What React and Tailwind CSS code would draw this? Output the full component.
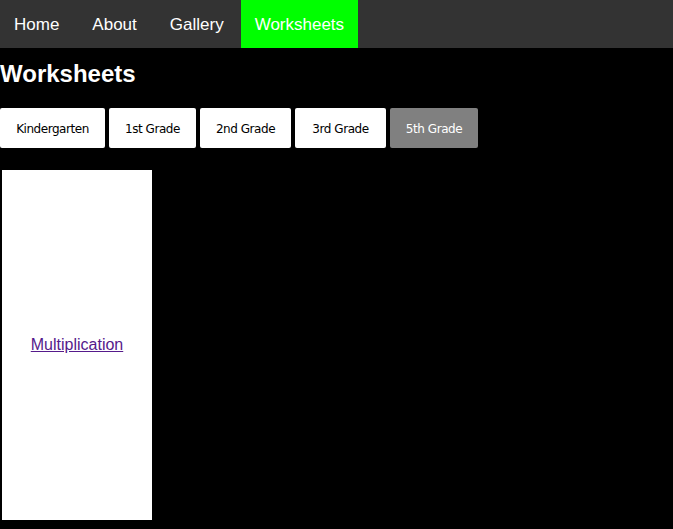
const grades = [
  { label: "Kindergarten", w: "w-[105px]" },
  { label: "1st Grade", w: "w-[87px]" },
  { label: "2nd Grade", w: "w-[91px]" },
  { label: "3rd Grade", w: "w-[91px]" },
  { label: "5th Grade", w: "w-[88px]" },
];

export default function App() {
  const active = "5th Grade";

  return (
    <div className="min-h-[529px] bg-black font-['Liberation_Sans',Arial,sans-serif]">
      <nav className="flex h-12 bg-[#333333] pt-[1px] text-[17px] text-white">
        <a className="flex items-center pl-[14px] pr-[17px]">Home</a>
        <a className="flex items-center px-[16px]">About</a>
        <a className="flex items-center pl-[17px] pr-[17px]">Gallery</a>
        <a className="-mt-[1px] flex items-center bg-[#00ff00] px-[14px] pt-[1px]">Worksheets</a>
      </nav>

      <h2 className="mt-[12px] text-[24px] font-bold leading-[28px] text-white">Worksheets</h2>

      <div className="mt-[20px] flex gap-[4px]">
        {grades.map((g) => (
          <button
            key={g.label}
            className={
              "h-10 rounded-[2px] pt-[1px] font-['DejaVu_Sans',Tahoma,sans-serif] text-[12px] tracking-[-0.45px] " +
              g.w +
              " " +
              (g.label === active ? "bg-[#808080] text-white" : "bg-white text-black")
            }
          >
            {g.label}
          </button>
        ))}
      </div>

      <div className="ml-[2px] mt-[22px] flex h-[350px] w-[150px] items-center justify-center bg-white">
        <a href="#" className="text-[16px] text-[#551a8b] underline">
          Multiplication
        </a>
      </div>
    </div>
  );
}
